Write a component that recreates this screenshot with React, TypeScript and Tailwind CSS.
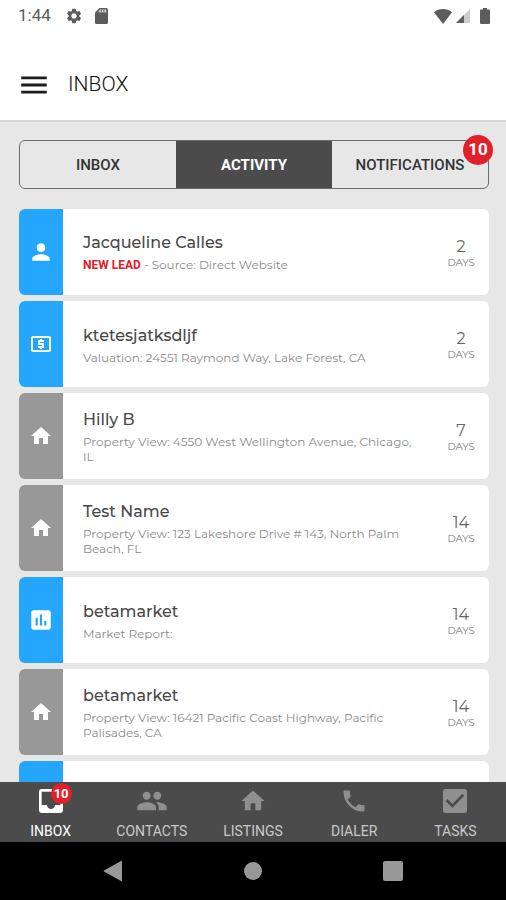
import type { ComponentType, ReactNode } from "react";
import {
  MdAssessment,
  MdCheckBox,
  MdHome,
  MdInbox,
  MdLocalAtm,
  MdMenu,
  MdPeople,
  MdPerson,
  MdPhone,
  MdSettings,
} from "react-icons/md";

type Icon = ComponentType<{ className?: string }>;

type Activity = {
  icon: Icon;
  iconClass: string;
  tone: string;
  name: string;
  detail: ReactNode;
  days: number;
};

const BLUE = "bg-[#24a6fc]";
const GREY = "bg-[#989898]";

const activities: Activity[] = [
  {
    icon: MdPerson,
    iconClass: "size-[26px]",
    tone: BLUE,
    name: "Jacqueline Calles",
    detail: (
      <>
        <span className="font-[Roboto,sans-serif] font-bold text-[#e2202a]">NEW LEAD</span> - Source: Direct Website
      </>
    ),
    days: 2,
  },
  {
    icon: MdLocalAtm,
    iconClass: "size-6",
    tone: BLUE,
    name: "ktetesjatksdljf",
    detail: "Valuation: 24551 Raymond Way, Lake Forest, CA",
    days: 2,
  },
  {
    icon: MdHome,
    iconClass: "size-6",
    tone: GREY,
    name: "Hilly B",
    detail: "Property View: 4550 West Wellington Avenue, Chicago, IL",
    days: 7,
  },
  {
    icon: MdHome,
    iconClass: "size-6",
    tone: GREY,
    name: "Test Name",
    detail: "Property View: 123 Lakeshore Drive # 143, North Palm Beach, FL",
    days: 14,
  },
  {
    icon: MdAssessment,
    iconClass: "size-[26px]",
    tone: BLUE,
    name: "betamarket",
    detail: "Market Report:",
    days: 14,
  },
  {
    icon: MdHome,
    iconClass: "size-6",
    tone: GREY,
    name: "betamarket",
    detail: "Property View: 16421 Pacific Coast Highway, Pacific Palisades, CA",
    days: 14,
  },
];

const navItems: { icon: Icon; iconClass: string; label: string; badge?: number }[] = [
  { icon: MdInbox, iconClass: "size-8", label: "INBOX", badge: 10 },
  { icon: MdPeople, iconClass: "size-8", label: "CONTACTS" },
  { icon: MdHome, iconClass: "size-7", label: "LISTINGS" },
  { icon: MdPhone, iconClass: "size-7", label: "DIALER" },
  { icon: MdCheckBox, iconClass: "size-8", label: "TASKS" },
];

function StatusBar() {
  return (
    <div className="flex h-8 shrink-0 items-center pl-[18px] pr-4 text-[#5c5c5c]">
      <span className="text-[17px]">1:44</span>
      <MdSettings className="ml-3.5 size-[18px]" />
      <svg viewBox="0 0 13 16" className="ml-3 h-4 w-[13px]" fill="currentColor" aria-hidden="true">
        <path d="M4.500 0H11.500A1.500 1.500 0 0 1 13 1.500V14.500A1.500 1.500 0 0 1 11.500 16H1.500A1.500 1.500 0 0 1 0 14.500V4.500Z" />
        <path d="M5 1.500H11.400V4.500H3.600V3Z" fill="#c4c4c4" />
        <path d="M6 2h.6v2.500H6zM8.600 2h.6v2.500h-.6z" />
      </svg>
      <div className="ml-auto flex items-center" aria-hidden="true">
        <svg viewBox="0 0 18 15" className="h-[15px] w-[18px]" fill="currentColor">
          <path d="M0 3.2C5 -1 13 -1 18 3.2L9 15Z" />
        </svg>
        <svg viewBox="0 0 15 15" className="ml-1 size-3.5">
          <path d="M15 0V15H0Z" fill="#cdcdcd" />
          <path d="M8.5 6.5V15H0Z" fill="currentColor" />
        </svg>
        <svg viewBox="0 0 10 16" className="ml-2.5 h-4 w-2.5" fill="currentColor">
          <path d="M3 0H7V1.6H9A1 1 0 0 1 10 2.6V15A1 1 0 0 1 9 16H1A1 1 0 0 1 0 15V2.6A1 1 0 0 1 1 1.6H3Z" />
        </svg>
      </div>
    </div>
  );
}

function ActivityCard({ item }: { item: Activity }) {
  const ItemIcon = item.icon;
  return (
    <li className="flex h-[86px] shrink-0 overflow-hidden rounded-md bg-white">
      <div className={`flex w-11 shrink-0 items-center justify-center text-white ${item.tone}`}>
        <ItemIcon className={item.iconClass} />
      </div>
      <div className="flex min-w-0 flex-1 flex-col justify-center gap-1 pt-0.5 pr-3 pl-5 font-[Montserrat,Inter,sans-serif]">
        <h2 className="text-base leading-5 font-medium text-[#484848]">{item.name}</h2>
        <p className="text-xs leading-[15px] text-[#8a8a8a]">{item.detail}</p>
      </div>
      <div className="flex w-14 shrink-0 flex-col items-center justify-center pt-1 font-[Montserrat,Inter,sans-serif]">
        <span className="text-base leading-[18px] text-[#666]">{item.days}</span>
        <span className="text-[10px] leading-[14px] text-[#777]">DAYS</span>
      </div>
    </li>
  );
}

export default function App() {
  return (
    <div className="flex h-screen flex-col bg-white font-[Roboto,sans-serif]">
      <StatusBar />
      <header className="flex h-[90px] shrink-0 items-center border-b-2 border-[#d6d6d6] px-[18px] pt-[18px]">
        <button type="button" aria-label="Open menu" className="text-[#1c1c1c]">
          <MdMenu className="-ml-px size-[34px]" />
        </button>
        <h1 className="ml-[17px] text-[21px] font-light text-[#111]">INBOX</h1>
      </header>

      <main className="flex min-h-0 flex-1 flex-col bg-[#e7e7e7] pt-[18px] pr-[17px] pl-[19px]">
        <div className="relative shrink-0">
          <div
            role="tablist"
            className="grid h-[49px] grid-cols-3 overflow-hidden rounded-md border border-[#6c6c6c] text-[15px] font-medium text-[#333]"
          >
            <button type="button" role="tab" aria-selected="false" className="pt-0.5">
              INBOX
            </button>
            <button type="button" role="tab" aria-selected="true" className="bg-[#4b4b4b] pt-0.5 font-bold text-white">
              ACTIVITY
            </button>
            <button type="button" role="tab" aria-selected="false" className="pt-0.5">
              NOTIFICATIONS
            </button>
          </div>
          <span className="absolute -top-[5px] -right-1 flex size-[30px] items-center justify-center rounded-full bg-[#e2202a] text-[17px] font-bold text-white">
            10
          </span>
        </div>

        <ul className="mt-5 flex min-h-0 flex-1 flex-col gap-1.5 overflow-y-auto [scrollbar-width:none]">
          {activities.map((item, i) => (
            <ActivityCard key={i} item={item} />
          ))}
          <li className="flex h-[86px] shrink-0 overflow-hidden rounded-md bg-white" aria-hidden="true">
            <div className={`w-11 ${BLUE}`} />
          </li>
        </ul>
      </main>

      <nav className="grid h-[60px] shrink-0 grid-cols-5 bg-[#4b4b4b] text-[#8f8f8f]">
        {navItems.map(({ icon: NavIcon, iconClass, label, badge }) => (
          <button key={label} type="button" className="flex flex-col items-center pt-[3px]">
            <span className={`relative flex size-8 items-center justify-center ${badge ? "text-white" : ""}`}>
              <NavIcon className={iconClass} />
              {badge && (
                <span className="absolute -top-0.5 -right-[5px] flex size-[21px] items-center justify-center rounded-full bg-[#e2202a] text-[13px] font-bold text-white">
                  {badge}
                </span>
              )}
            </span>
            <span className={`mt-[5px] text-sm leading-[18px] ${badge ? "text-white" : "text-[#c9c9c9]"}`}>
              {label}
            </span>
          </button>
        ))}
      </nav>

      <div className="flex h-[58px] shrink-0 items-center justify-center gap-[121px] bg-black text-[#989898]">
        <button type="button" aria-label="Back" className="flex w-5 justify-center">
          <svg viewBox="0 0 20 22" className="h-[22px] w-5" fill="currentColor">
            <path d="M18 1Q19 .5 19 1.6V20.4Q19 21.500 18 21L1 11.600Q.4 11 1 10.400Z" />
          </svg>
        </button>
        <button type="button" aria-label="Home" className="size-[18px] rounded-full bg-current" />
        <button type="button" aria-label="Recent apps" className="size-5 rounded-xs bg-current" />
      </div>
    </div>
  );
}
